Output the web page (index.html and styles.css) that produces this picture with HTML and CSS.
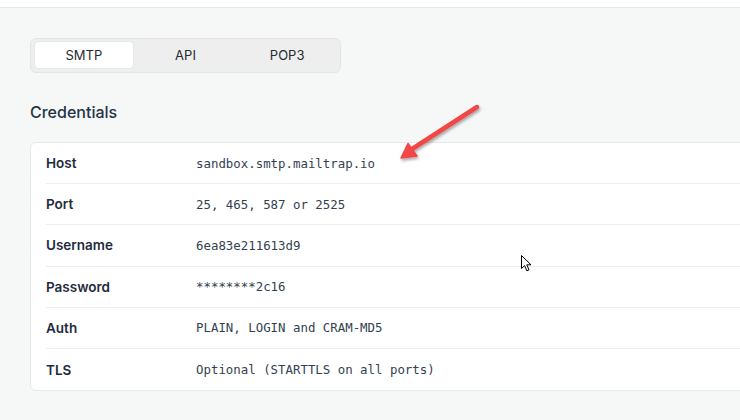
FILE: index.html
```html
<!DOCTYPE html>
<html lang="en">
<head>
<meta charset="utf-8">
<title>SMTP Credentials</title>
<link rel="stylesheet" href="styles.css">
</head>
<body>
<div class="topbar"></div>
<main class="main">
  <div class="tabs">
    <div class="tab active">SMTP</div>
    <div class="tab">API</div>
    <div class="tab">POP3</div>
  </div>
  <h2 class="heading">Credentials</h2>
  <div class="card">
    <div class="row"><div class="label">Host</div><div class="value">sandbox.smtp.mailtrap.io</div></div>
    <div class="row"><div class="label">Port</div><div class="value">25, 465, 587 or 2525</div></div>
    <div class="row"><div class="label">Username</div><div class="value">6ea83e211613d9</div></div>
    <div class="row"><div class="label">Password</div><div class="value">********2c16</div></div>
    <div class="row"><div class="label">Auth</div><div class="value">PLAIN, LOGIN and CRAM-MD5</div></div>
    <div class="row"><div class="label">TLS</div><div class="value">Optional (STARTTLS on all ports)</div></div>
  </div>
</main>
<svg class="arrow" width="100" height="70" viewBox="390 95 100 70">
  <defs>
    <filter id="sh" x="-20%" y="-20%" width="140%" height="140%">
      <feDropShadow dx="1" dy="2" stdDeviation="1.5" flood-color="#000" flood-opacity="0.35"/>
    </filter>
  </defs>
  <g filter="url(#sh)">
    <line x1="477" y1="107" x2="409" y2="151" stroke="#f24646" stroke-width="4.5" stroke-linecap="round"/>
    <polygon points="401,158 408,143.5 417,156" fill="#f24646" stroke="#f24646" stroke-width="1.5" stroke-linejoin="round"/>
  </g>
</svg>
<svg class="cursor" width="13" height="19" viewBox="0 0 13 19">
  <path d="M0.5 0.5 L0.5 13.5 L3.6 10.6 L5.8 15.8 L8 14.9 L5.8 9.8 L10 9.8 Z" fill="#fff" stroke="#000" stroke-width="1" stroke-linejoin="round"/>
</svg>
</body>
</html>
```
FILE: styles.css
```css
html, body {
  margin: 0;
  padding: 0;
}
body {
  background: #f6f7f7;
  width: 740px;
  height: 420px;
  overflow: hidden;
  position: relative;
  font-family: Inter, "Noto Sans", "Liberation Sans", sans-serif;
  color: #1f2a3a;
}
.topbar {
  height: 7px;
  background: #ffffff;
  border-bottom: 1px solid #e6e8ea;
}
.main {
  padding: 30px 0 0 30px;
}
.tabs {
  box-sizing: border-box;
  width: 311px;
  height: 35px;
  display: grid;
  grid-template-columns: repeat(3, 1fr);
  gap: 4px;
  padding: 3px 4px 4px;
  border: 1px solid #e2e4e7;
  border-radius: 6px;
  background: #eeeeef;
}
.tab {
  display: flex;
  align-items: center;
  justify-content: center;
  font-size: 13px;
  color: #262b33;
  border-radius: 4px;
}
.tab.active {
  background: #ffffff;
  box-shadow: 0 0 0 1px #e6e8eb;
}
.heading {
  margin: 29px 0 20px;
  font-size: 16px;
  line-height: 20px;
  font-weight: 500;
  color: #243447;
}
.card {
  box-sizing: border-box;
  width: 740px;
  background: #ffffff;
  border: 1px solid #e6e8ea;
  border-radius: 6px;
}
.row {
  box-sizing: border-box;
  height: 41.2px;
  margin-left: 15px;
  display: flex;
  align-items: center;
  border-bottom: 1px solid #eceef0;
}
.row:last-child {
  border-bottom: none;
}
.label {
  width: 150px;
  flex: none;
  font-size: 13.5px;
  font-weight: 600;
  color: #1f2b3c;
}
.value {
  font-family: "DejaVu Sans Mono", "Liberation Mono", monospace;
  font-size: 12.4px;
  color: #333f51;
}
.arrow {
  position: absolute;
  left: 390px;
  top: 95px;
}
.cursor {
  position: absolute;
  left: 521px;
  top: 255px;
}
```
